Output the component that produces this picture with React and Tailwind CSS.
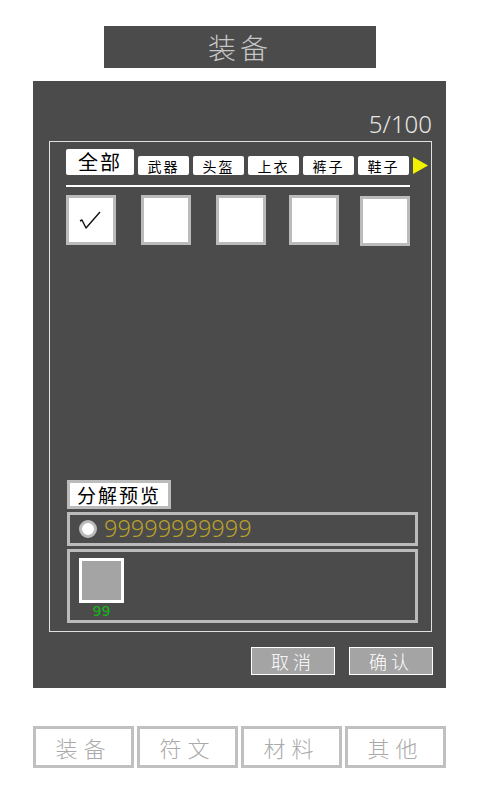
import React from 'react';

const cjk = { fontFamily: '"Noto Sans CJK SC", "Noto Sans", sans-serif' };

const tabs = ['武器', '头盔', '上衣', '裤子', '鞋子'];
const bottomTabs = ['装备', '符文', '材料', '其他'];

const Slot = ({ checked }) => (
  <div className="w-[50px] h-[50px] border-[3px] border-[#bbbbbb] bg-white flex items-center justify-center">
    {checked && (
      <svg width="22" height="20" viewBox="0 0 22 20" className="mt-[2px] -ml-[2px]">
        <path d="M1 10 L3 9 L7 17 L21 1" fill="none" stroke="#111" strokeWidth="1.4" strokeLinejoin="round" />
      </svg>
    )}
  </div>
);

const App = () => {
  return (
    <div className="w-[480px] h-[800px] bg-white flex flex-col" style={cjk}>
      {/* 标题 */}
      <div className="mt-[26px] ml-[104px] w-[272px] h-[42px] bg-[#4b4b4b] flex items-center justify-center">
        <span className="text-[28px] font-light text-[#c6c6c6] tracking-[4px] leading-none">装备</span>
      </div>

      {/* 主面板 */}
      <div className="mt-[13px] ml-[33px] w-[413px] h-[607px] bg-[#4b4b4b] flex flex-col">
        <div className="h-[60px] flex items-end justify-end pr-[14px] pb-[5px]">
          <span className="text-[24px] font-light text-[#e6e6e6] leading-none" style={{ fontFamily: '"Noto Sans", sans-serif' }}>5/100</span>
        </div>

        <div className="ml-[16px] w-[383px] h-[491px] border border-[#e0e0e0] flex flex-col pl-[16px] pt-[7px] pb-[8px]">
          {/* 分类 */}
          <div className="flex items-end gap-[4px]">
            <div className="w-[68px] h-[26px] bg-white rounded-[2px] flex items-center justify-center text-[20px] leading-none text-black tracking-[2px]">全部</div>
            {tabs.map((t) => (
              <div key={t} className="w-[51px] h-[19px] bg-white rounded-[2px] flex items-center justify-center text-[14px] leading-none text-black tracking-[2px]">{t}</div>
            ))}
            <svg width="15" height="17" viewBox="0 0 15 17" className="mb-[1px]">
              <polygon points="0,0 15,8.5 0,17" fill="#f2f200" />
            </svg>
          </div>
          <div className="mt-[10px] w-[344px] h-[2px] bg-white" />

          {/* 装备格子 */}
          <div className="mt-[8px] flex items-start w-[344px]">
            <Slot checked />
            <div className="ml-[25px]"><Slot /></div>
            <div className="ml-[25px]"><Slot /></div>
            <div className="ml-[23px]"><Slot /></div>
            <div className="ml-[21px] mt-[1px]"><Slot /></div>
          </div>

          {/* 分解预览 */}
          <div className="mt-auto flex flex-col">
            <div className="w-[104px] h-[29px] border-[3px] border-[#bbbbbb] bg-white flex items-center justify-center text-[19px] leading-none text-black tracking-[2px] ml-[1px]">分解预览</div>
            <div className="mt-[3px] ml-[1px] w-[351px] h-[34px] border-[3px] border-[#bbbbbb] flex items-center pl-[9px]">
              <div className="w-[18px] h-[18px] rounded-full bg-white border-[3px] border-[#bbbbbb]" />
              <span className="ml-[7px] text-[23.5px] leading-none text-[#bba22a] font-light" style={{ fontFamily: '"Noto Sans", sans-serif' }}>99999999999</span>
            </div>
            <div className="mt-[3px] ml-[1px] w-[351px] h-[74px] border-[3px] border-[#bbbbbb] pl-[9px] pt-[6px]">
              <div className="w-[45px] flex flex-col items-center">
                <div className="w-[45px] h-[45px] border-[3px] border-white bg-[#a4a4a4]" />
                <span className="mt-[1px] text-[14px] leading-none text-[#15b815]" style={{ fontFamily: '"DejaVu Sans", sans-serif' }}>99</span>
              </div>
            </div>
          </div>
        </div>

        {/* 按钮 */}
        <div className="mt-[15px] flex justify-end pr-[13px] gap-[14px]">
          {['取消', '确认'].map((b) => (
            <div key={b} className="w-[84px] h-[28px] bg-[#a4a4a4] border border-white flex items-center justify-center text-[18px] leading-none text-white tracking-[4px] font-light">{b}</div>
          ))}
        </div>
      </div>

      {/* 底部标签 */}
      <div className="mt-[38px] ml-[33px] flex gap-[3px]">
        {bottomTabs.map((t) => (
          <div key={t} className="w-[101px] h-[42px] border-[3px] border-[#c0c0c0] bg-white flex items-center justify-center text-[22px] leading-none text-[#aaaaaa] tracking-[6px] font-light">{t}</div>
        ))}
      </div>
    </div>
  );
};

export default App;
